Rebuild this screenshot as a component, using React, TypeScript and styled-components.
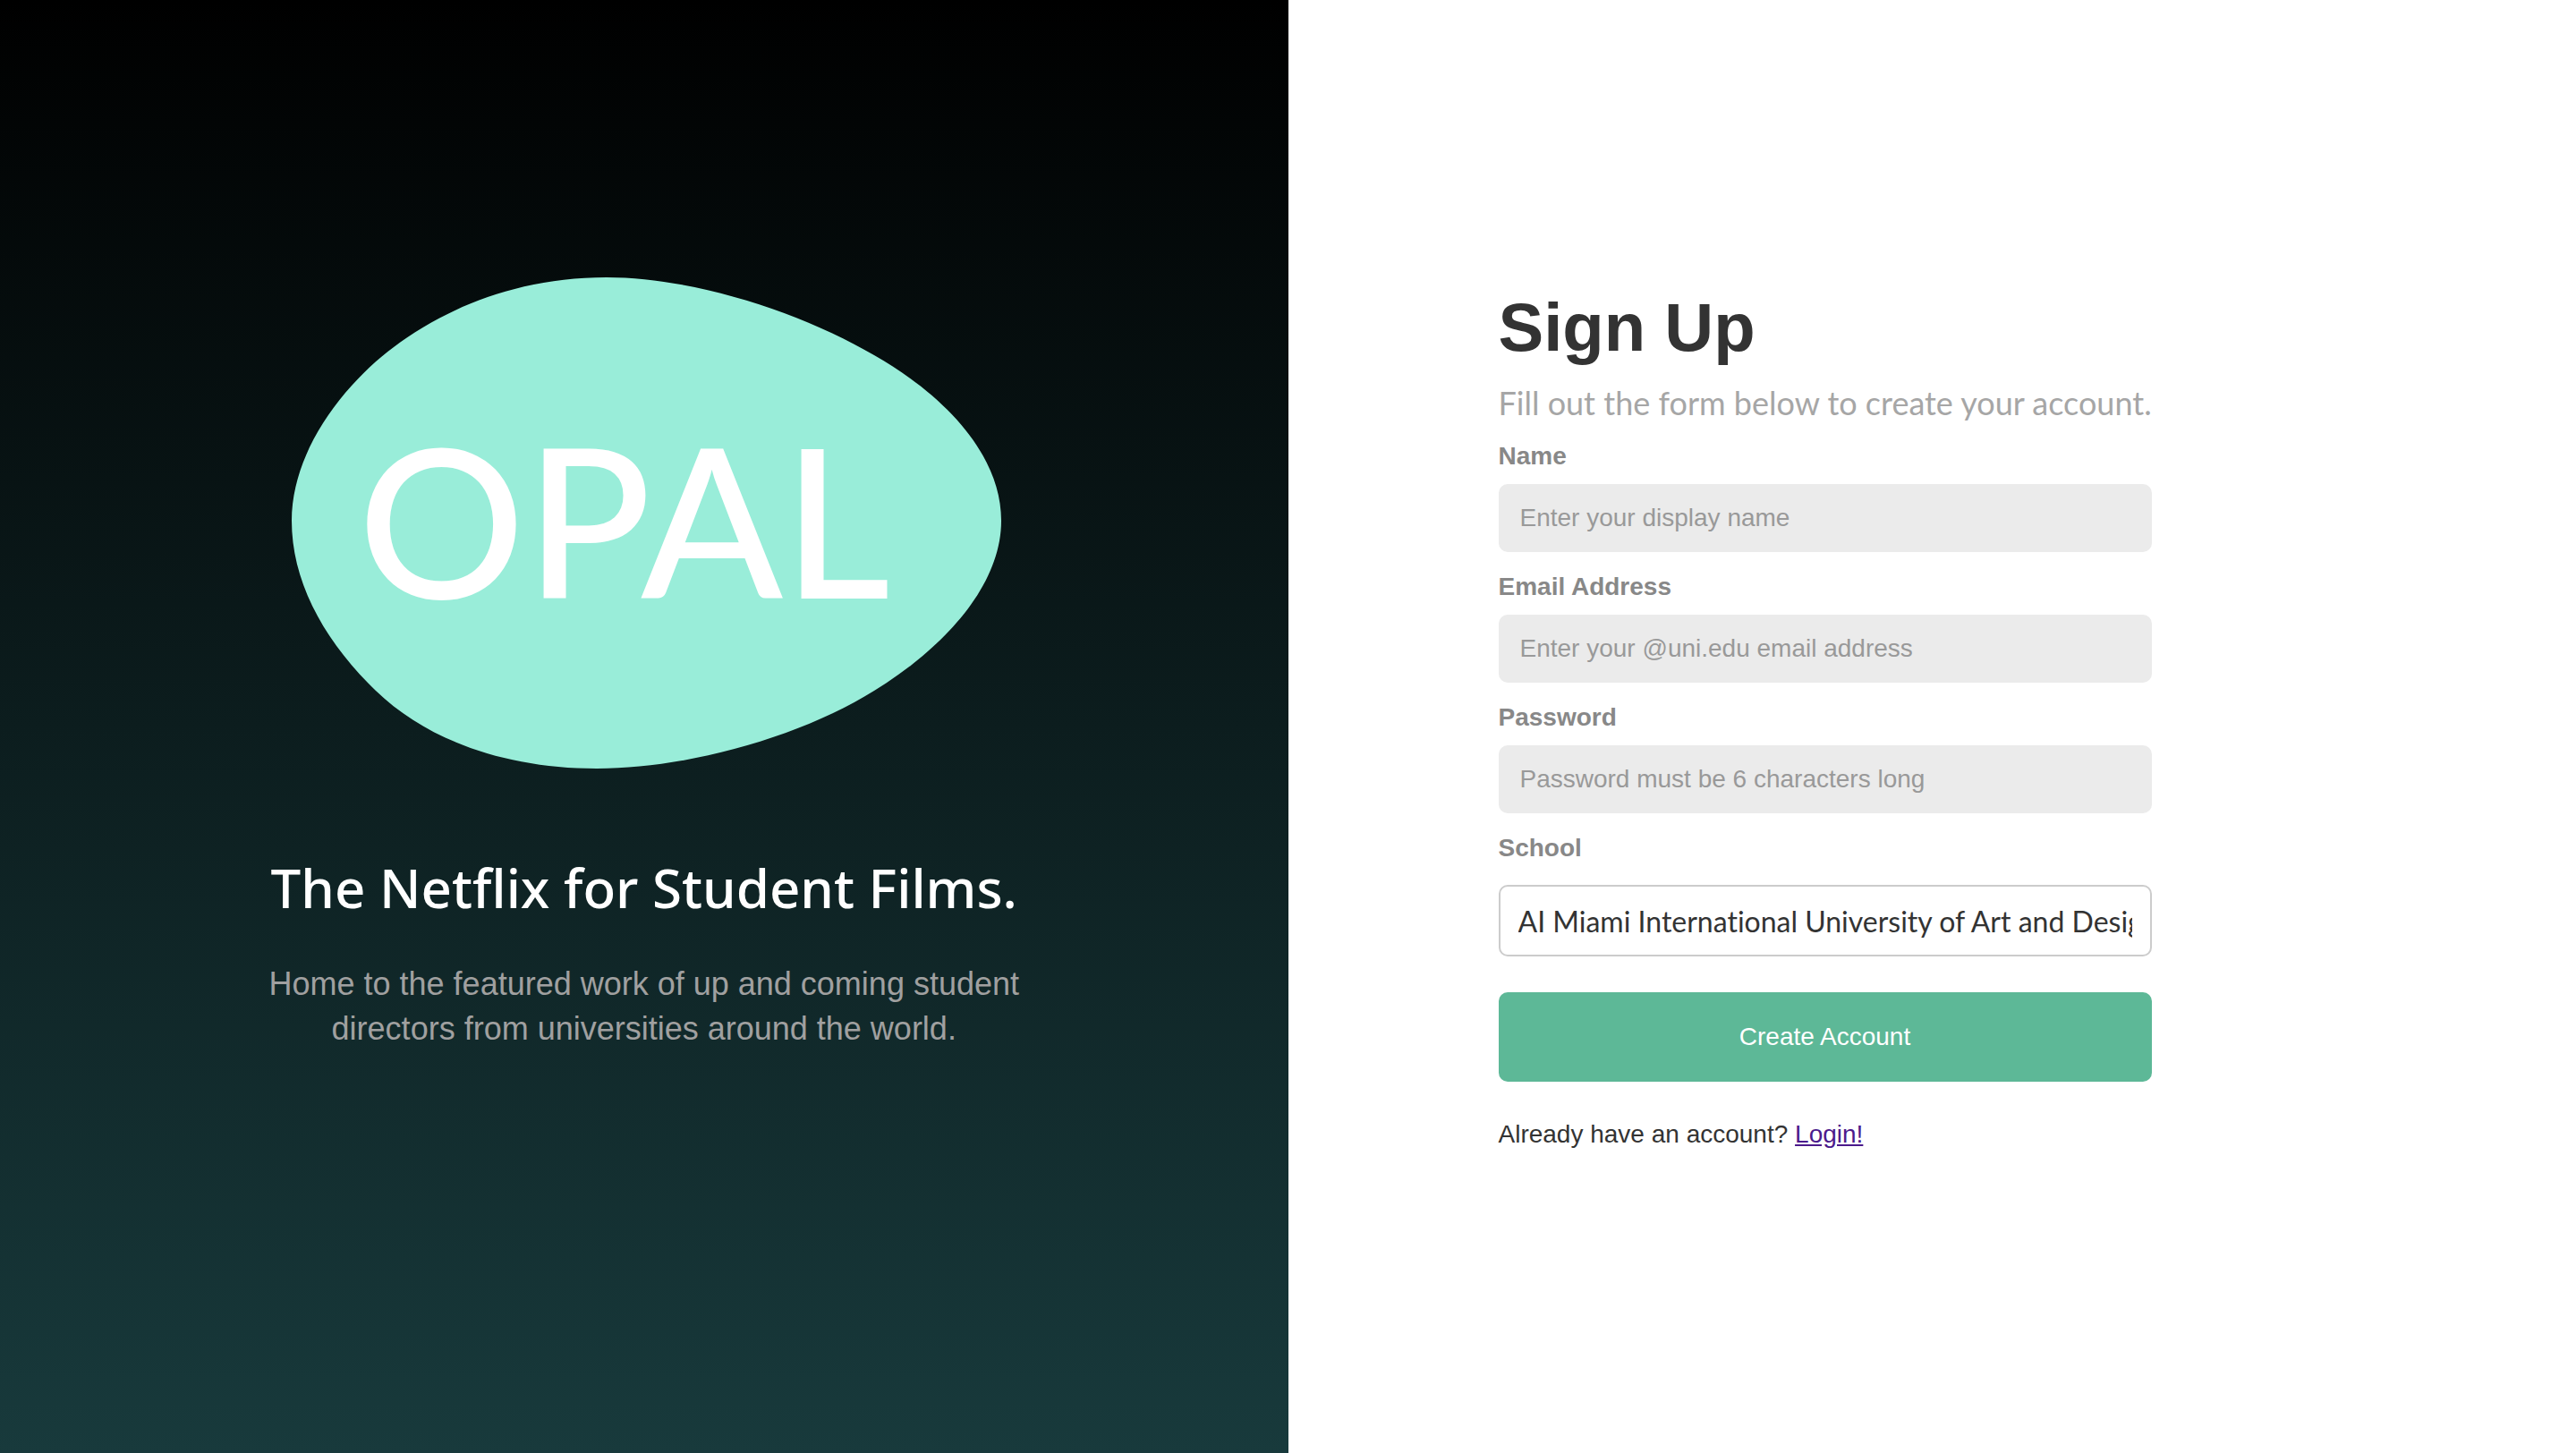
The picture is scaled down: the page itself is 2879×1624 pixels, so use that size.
import React from "react";
import styled, { createGlobalStyle } from "styled-components";

const Global = createGlobalStyle`
  *, *::before, *::after { box-sizing: border-box; }
  body { margin: 0; background: #ffffff; }
`;

const sans = `"Liberation Sans", Arial, sans-serif`;
const lato = `Lato, sans-serif`;

const Page = styled.div`
  display: grid;
  grid-template-columns: 1fr 1fr;
  min-height: 100vh;
  font-family: ${sans};
  font-size: 28px;
  line-height: 32px;
  color: #333333;
`;

const Brand = styled.section`
  display: flex;
  flex-direction: column;
  align-items: center;
  padding: 310px 40px 40px;
  background: linear-gradient(#000000, #183a3c);
  text-align: center;
`;

const Logo = styled.svg`
  display: block;
  width: 800px;
  max-width: 100%;
  height: auto;
  font-family: ${lato};
  font-weight: 500;
`;

const Tagline = styled.h2`
  margin: 94px 0 0;
  font-family: "Noto Sans", sans-serif;
  font-size: 60px;
  font-weight: 500;
  line-height: 76px;
  color: #ffffff;
`;

const Pitch = styled.p`
  max-width: 880px;
  margin: 45px 0 0;
  font-size: 36px;
  line-height: 50px;
  color: #a0a0a0;
`;

const Main = styled.main`
  padding: 322px 40px 40px 235px;
`;

const Form = styled.form`
  display: flex;
  flex-direction: column;
  width: 730px;
  max-width: 100%;
`;

const Title = styled.h1`
  margin: 0;
  font-size: 76px;
  font-weight: 700;
  line-height: 88px;
`;

const Subtitle = styled.p`
  margin: 18px 0 14px;
  font-family: ${lato};
  font-size: 36px;
  line-height: 44px;
  white-space: nowrap;
  color: #a6a6a6;
`;

const Field = styled.div`
  display: flex;
  flex-direction: column;
  gap: 15px;
  margin: 8px 0 15px;
`;

const Label = styled.label`
  font-weight: 700;
  color: #888888;
`;

const Input = styled.input`
  width: 100%;
  height: 76px;
  padding: 0 24px;
  border: 0;
  border-radius: 10px;
  background: #ebebeb;
  font-family: ${sans};
  font-size: 28px;
  color: #333333;

  &::placeholder { color: #999999; opacity: 1; }
`;

const Select = styled.select`
  appearance: none;
  width: 100%;
  height: 80px;
  margin-top: 10px;
  padding: 0 20px;
  border: 2px solid #cccccc;
  border-radius: 10px;
  background: #ffffff;
  font-family: ${lato};
  font-size: 32px;
  font-variant-ligatures: none;
  color: #333333;
  text-overflow: clip;
`;

const Submit = styled.button`
  height: 100px;
  margin-top: 25px;
  border: 0;
  border-radius: 10px;
  background: #5db897;
  font-family: ${sans};
  font-size: 28px;
  color: #ffffff;
  cursor: pointer;
`;

const Footer = styled.p`
  margin: 43px 0 0;
`;

const Login = styled.a`
  color: #4b1a8c;
`;

const fields = [
  { id: "name", label: "Name", type: "text", hint: "Enter your display name" },
  { id: "email", label: "Email Address", type: "email", hint: "Enter your @uni.edu email address" },
  { id: "password", label: "Password", type: "password", hint: "Password must be 6 characters long" },
];

export default function App() {
  return (
    <>
      <Global />
      <Page>
        <Brand>
          <Logo viewBox="-6 0 800 550" role="img" aria-label="OPAL">
            <path
              fill="#99edd9"
              d="M352 0C450 0 571 40 651 87C733 134 793 200 793 272C793 347 725 417 651 462C571 512 445 549 341 549C240 549 152 518 94 462C36 406 0 340 0 272C0 190 64 115 114 78C170 36 250 0 352 0Z"
            />
            <text x="74" y="359" fontSize="233" fill="#ffffff">OPAL</text>
          </Logo>
          <Tagline>The Netflix for Student Films.</Tagline>
          <Pitch>
            Home to the featured work of up and coming student directors from
            universities around the world.
          </Pitch>
        </Brand>
        <Main>
          <Form onSubmit={(e) => e.preventDefault()}>
            <Title>Sign Up</Title>
            <Subtitle>Fill out the form below to create your account.</Subtitle>
            {fields.map((f) => (
              <Field key={f.id}>
                <Label htmlFor={f.id}>{f.label}</Label>
                <Input id={f.id} type={f.type} placeholder={f.hint} />
              </Field>
            ))}
            <Field>
              <Label htmlFor="school">School</Label>
              <Select id="school">
                <option>AI Miami International University of Art and Design</option>
              </Select>
            </Field>
            <Submit type="submit">Create Account</Submit>
            <Footer>
              Already have an account? <Login href="#login">Login!</Login>
            </Footer>
          </Form>
        </Main>
      </Page>
    </>
  );
}
